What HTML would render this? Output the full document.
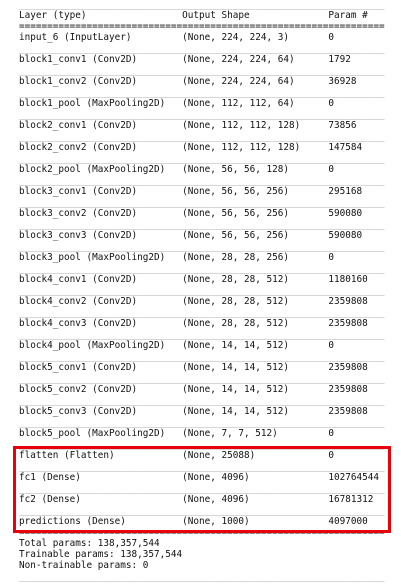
<!DOCTYPE html>
<html><head><style>
html,body{margin:0;padding:0;background:#fff;width:401px;height:584px;overflow:hidden}
pre{position:absolute;left:19px;top:-1.5px;margin:0;font-family:"DejaVu Sans Mono","Liberation Mono",monospace;font-size:9.35px;line-height:11px;color:#111;white-space:pre}
.u{color:#999}
.box{position:absolute;left:13px;top:446px;width:372px;height:81px;border:3px solid #e8000b}
</style></head><body>
<pre><span class="u">_________________________________________________________________</span>
Layer (type)                 Output Shape              Param #   
=================================================================
input_6 (InputLayer)         (None, 224, 224, 3)       0         
<span class="u">_________________________________________________________________</span>
block1_conv1 (Conv2D)        (None, 224, 224, 64)      1792      
<span class="u">_________________________________________________________________</span>
block1_conv2 (Conv2D)        (None, 224, 224, 64)      36928     
<span class="u">_________________________________________________________________</span>
block1_pool (MaxPooling2D)   (None, 112, 112, 64)      0         
<span class="u">_________________________________________________________________</span>
block2_conv1 (Conv2D)        (None, 112, 112, 128)     73856     
<span class="u">_________________________________________________________________</span>
block2_conv2 (Conv2D)        (None, 112, 112, 128)     147584    
<span class="u">_________________________________________________________________</span>
block2_pool (MaxPooling2D)   (None, 56, 56, 128)       0         
<span class="u">_________________________________________________________________</span>
block3_conv1 (Conv2D)        (None, 56, 56, 256)       295168    
<span class="u">_________________________________________________________________</span>
block3_conv2 (Conv2D)        (None, 56, 56, 256)       590080    
<span class="u">_________________________________________________________________</span>
block3_conv3 (Conv2D)        (None, 56, 56, 256)       590080    
<span class="u">_________________________________________________________________</span>
block3_pool (MaxPooling2D)   (None, 28, 28, 256)       0         
<span class="u">_________________________________________________________________</span>
block4_conv1 (Conv2D)        (None, 28, 28, 512)       1180160   
<span class="u">_________________________________________________________________</span>
block4_conv2 (Conv2D)        (None, 28, 28, 512)       2359808   
<span class="u">_________________________________________________________________</span>
block4_conv3 (Conv2D)        (None, 28, 28, 512)       2359808   
<span class="u">_________________________________________________________________</span>
block4_pool (MaxPooling2D)   (None, 14, 14, 512)       0         
<span class="u">_________________________________________________________________</span>
block5_conv1 (Conv2D)        (None, 14, 14, 512)       2359808   
<span class="u">_________________________________________________________________</span>
block5_conv2 (Conv2D)        (None, 14, 14, 512)       2359808   
<span class="u">_________________________________________________________________</span>
block5_conv3 (Conv2D)        (None, 14, 14, 512)       2359808   
<span class="u">_________________________________________________________________</span>
block5_pool (MaxPooling2D)   (None, 7, 7, 512)         0         
<span class="u">_________________________________________________________________</span>
flatten (Flatten)            (None, 25088)             0         
<span class="u">_________________________________________________________________</span>
fc1 (Dense)                  (None, 4096)              102764544 
<span class="u">_________________________________________________________________</span>
fc2 (Dense)                  (None, 4096)              16781312  
<span class="u">_________________________________________________________________</span>
predictions (Dense)          (None, 1000)              4097000   
=================================================================
Total params: 138,357,544
Trainable params: 138,357,544
Non-trainable params: 0
<span class="u">_________________________________________________________________</span>
</pre>
<div class="box"></div>
</body></html>
